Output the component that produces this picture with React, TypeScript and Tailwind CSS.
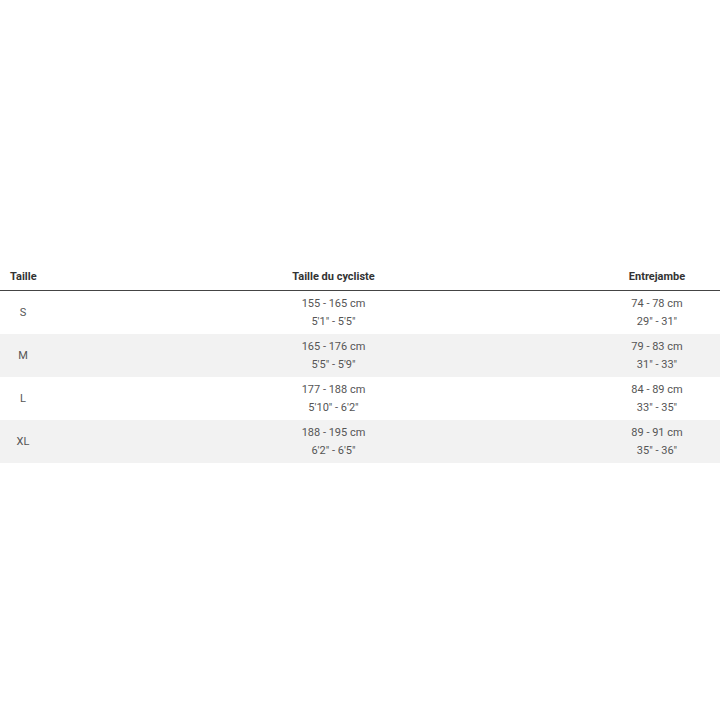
const rows = [
  { size: "S", height: ["155 - 165 cm", "5'1\" - 5'5\""], inseam: ["74 - 78 cm", "29\" - 31\""] },
  { size: "M", height: ["165 - 176 cm", "5'5\" - 5'9\""], inseam: ["79 - 83 cm", "31\" - 33\""] },
  { size: "L", height: ["177 - 188 cm", "5'10\" - 6'2\""], inseam: ["84 - 89 cm", "33\" - 35\""] },
  { size: "XL", height: ["188 - 195 cm", "6'2\" - 6'5\""], inseam: ["89 - 91 cm", "35\" - 36\""] },
];

export default function App() {
  return (
    <div className="h-[720px] w-[720px] overflow-hidden bg-white pt-[264px] font-['Roboto',sans-serif]">
      <div className="w-[800px]">
        <div className="grid h-[27px] grid-cols-[153px_361px_1fr] items-center border-b border-[#444] text-[11px] font-bold text-[#333]">
          <div className="pl-[10px]">Taille</div>
          <div className="text-center">Taille du cycliste</div>
          <div className="text-center">Entrejambe</div>
        </div>
        {rows.map((r, i) => (
          <div
            key={r.size}
            className={
              "grid h-[43px] grid-cols-[153px_361px_1fr] items-center text-[11px] leading-[18px] text-[#555] " +
              (i % 2 === 1 ? "bg-[#f2f2f2]" : "bg-white")
            }
          >
            <div className="pl-[10px]">
              <div className="w-[26px] text-center">{r.size}</div>
            </div>
            <div className="text-center">
              <div>{r.height[0]}</div>
              <div>{r.height[1]}</div>
            </div>
            <div className="text-center">
              <div>{r.inseam[0]}</div>
              <div>{r.inseam[1]}</div>
            </div>
          </div>
        ))}
      </div>
    </div>
  );
}
